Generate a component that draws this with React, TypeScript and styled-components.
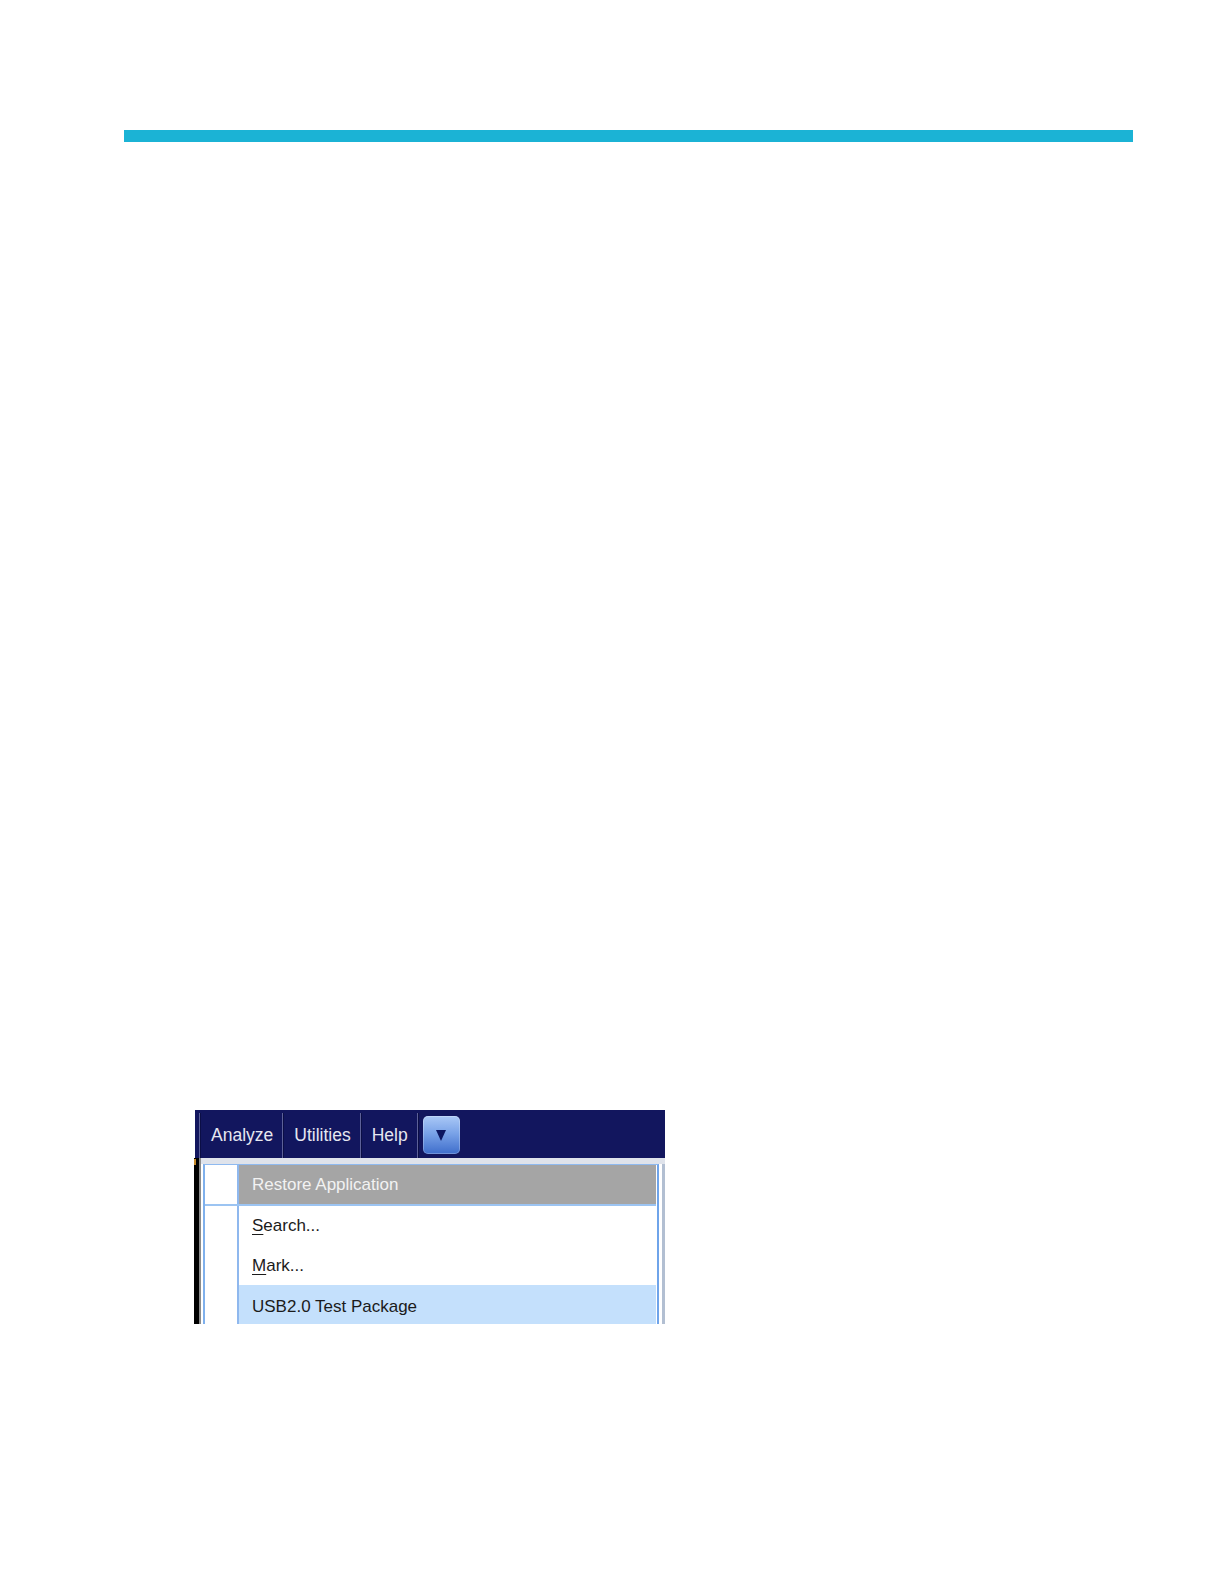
import React from "react";
import styled, { createGlobalStyle } from "styled-components";

const Global = createGlobalStyle`
  html, body { margin: 0; padding: 0; background: #ffffff; }
  body { font-family: "Liberation Sans", Arial, sans-serif; }
`;

const Page = styled.div`
  width: 1224px;
  min-height: 1584px;
  background: #ffffff;
  display: flex;
  flex-direction: column;
`;

const Rule = styled.div`
  margin: 130px 0 0 124px;
  width: 1009px;
  height: 12px;
  background: #1bb3d5;
`;

const Shot = styled.div`
  margin: 968px 0 0 194px;
  width: 471px;
  height: 214px;
  display: flex;
  flex-direction: column;
  overflow: hidden;
  background: #ffffff;
`;

const MenuBar = styled.div`
  height: 48px;
  flex: none;
  background: #12165e;
  display: flex;
  align-items: flex-start;
  padding-left: 4px;
  box-sizing: border-box;
  margin-left: 1px;
`;

const Sep = styled.div`
  width: 1px;
  height: 45px;
  margin-top: 3px;
  background: #5d6198;
  border-right: 1px solid #0b0e45;
`;

const MenuItem = styled.div`
  height: 48px;
  padding: 3px 9px 0 10px;
  display: flex;
  align-items: center;
  color: #e6e7f0;
  font-size: 17.5px;
  line-height: 1;
  box-sizing: border-box;
`;

const DropButton = styled.div`
  width: 37px;
  height: 38px;
  margin: 6px 0 0 4px;
  border-radius: 5px;
  background: linear-gradient(#aac8f6 0%, #7aa3e8 45%, #3e6dcb 100%);
  display: flex;
  align-items: center;
  justify-content: center;
  box-shadow: inset 0 0 0 1px rgba(255, 255, 255, 0.25);
`;

const Body = styled.div`
  flex: 1;
  display: flex;
`;

const Strip = styled.div`
  width: 5px;
  background: #000000;
  border-right: 2px solid #8a8a8a;
  position: relative;
`;

const OrangeDot = styled.div`
  position: absolute;
  left: 0;
  top: 1px;
  width: 2px;
  height: 6px;
  background: #c78a2a;
`;

const Right = styled.div`
  flex: 1;
  display: flex;
  flex-direction: column;
`;

const TopBand = styled.div`
  height: 6px;
  background: #dfe3eb;
  flex: none;
`;

const PanelWrap = styled.div`
  flex: 1;
  display: flex;
  padding-left: 2px;
  background: #ffffff;
`;

const Panel = styled.div`
  flex: 1;
  display: flex;
  flex-direction: column;
  border-left: 2px solid #7fb0ec;
  border-right: 2px solid #6fa4ea;
  border-top: 1px solid #8fbaf0;
  padding-right: 1px;
  background: #ffffff;
`;

const Tail = styled.div`
  width: 3px;
  margin-left: 3px;
  background: #b2bfd2;
`;

const Row = styled.div<{ $h: number }>`
  display: flex;
  height: ${(p) => p.$h}px;
  flex: none;
`;

const Gutter = styled.div`
  width: 32px;
  background: #ffffff;
  border-right: 2px solid #8fb8ee;
`;

type Tone = "gray" | "white" | "hover";

const Item = styled.div<{ $tone: Tone }>`
  flex: 1;
  display: flex;
  align-items: center;
  padding-left: 13px;
  font-size: 17px;
  background: ${(p) =>
    p.$tone === "gray" ? "#a5a5a5" : p.$tone === "hover" ? "#c4e0fc" : "#ffffff"};
  color: ${(p) => (p.$tone === "gray" ? "#f2f2f2" : "#1b1b1b")};
`;

const Divider = styled.div`
  height: 2px;
  background: #9cc4f2;
  flex: none;
`;

const Key = styled.span`
  text-decoration: underline;
  text-underline-offset: 3px;
`;

export default function App() {
  return (
    <Page>
      <Global />
      <Rule />
      <Shot>
        <MenuBar>
          <Sep />
          <MenuItem>Analyze</MenuItem>
          <Sep />
          <MenuItem>Utilities</MenuItem>
          <Sep />
          <MenuItem>Help</MenuItem>
          <Sep />
          <DropButton>
            <svg width="10" height="11" viewBox="0 0 10 11">
              <polygon points="0,0 10,0 5,11" fill="#0c1660" />
            </svg>
          </DropButton>
        </MenuBar>
        <Body>
          <Strip>
            <OrangeDot />
          </Strip>
          <Right>
            <TopBand />
            <PanelWrap>
              <Panel>
                <Row $h={39}>
                  <Gutter />
                  <Item $tone="gray">Restore Application</Item>
                </Row>
                <Divider />
                <Row $h={40}>
                  <Gutter />
                  <Item $tone="white">
                    <Key>S</Key>earch...
                  </Item>
                </Row>
                <Row $h={39}>
                  <Gutter />
                  <Item $tone="white">
                    <Key>M</Key>ark...
                  </Item>
                </Row>
                <Row $h={44}>
                  <Gutter />
                  <Item $tone="hover">USB2.0 Test Package</Item>
                </Row>
              </Panel>
              <Tail />
            </PanelWrap>
          </Right>
        </Body>
      </Shot>
    </Page>
  );
}
